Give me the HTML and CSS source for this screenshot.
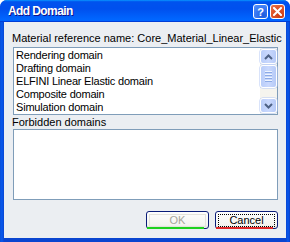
FILE: index.html
```html
<!DOCTYPE html>
<html>
<head>
<meta charset="utf-8">
<link rel="stylesheet" href="styles.css">
</head>
<body>
<div class="window">
  <div class="titlebar">
    <span class="title">Add Domain</span>
    <div class="tbtns">
      <span class="tb help">?</span>
      <span class="tb close"><svg width="9" height="9" viewBox="0 0 9 9"><path d="M1 1 L8 8 M8 1 L1 8" stroke="#fff" stroke-width="2" stroke-linecap="square" fill="none"/></svg></span>
    </div>
  </div>
  <div class="body">
    <div class="label">Material reference name: Core_Material_Linear_Elastic</div>
    <div class="list">
      <ul class="items">
        <li>Rendering domain</li>
        <li>Drafting domain</li>
        <li>ELFINI Linear Elastic domain</li>
        <li>Composite domain</li>
        <li>Simulation domain</li>
      </ul>
      <div class="scroll">
        <div class="sbtn"><svg width="9" height="6" viewBox="0 0 9 6"><path d="M1 5 L4.5 1.5 L8 5" stroke="#4d6185" stroke-width="2" fill="none"/></svg></div>
        <div class="thumb"><span></span><span></span><span></span><span></span></div>
        <div class="track"></div>
        <div class="sbtn"><svg width="9" height="6" viewBox="0 0 9 6"><path d="M1 1 L4.5 4.5 L8 1" stroke="#4d6185" stroke-width="2" fill="none"/></svg></div>
      </div>
    </div>
    <div class="label label2">Forbidden domains</div>
    <div class="list empty"></div>
    <div class="buttons">
      <div class="btn ok"><span class="txt">OK</span></div>
      <div class="btn cancel"><span class="txt focus">Cancel</span></div>
    </div>
  </div>
</div>
</body>
</html>
```

FILE: styles.css
```css
* { box-sizing: border-box; }
html, body { margin: 0; padding: 0; }
body { width: 290px; height: 242px; overflow: hidden; font-family: "Liberation Sans", Arial, sans-serif; font-size: 11px; }
.window {
  width: 290px; height: 242px;
  background: linear-gradient(90deg, #0a4fd8 0, #0758ee 2px, #0a45d0 4px, #0a45d0 286px, #0758ee 288px, #0a3ec8 290px);
  border-radius: 7px 7px 0 0;
  display: flex; flex-direction: column;
}
.titlebar {
  height: 22px; flex: none;
  background: linear-gradient(180deg, #0997ff, #0053ee 8%, #0050ee 40%, #0066ff 88%, #0066ff 93%, #005bff 95%, #003dd7 96%, #003dd7);
  border-radius: 7px 7px 0 0;
  display: flex; align-items: center; justify-content: space-between;
  padding: 0 5px 0 8px;
}
.title { color: #fff; font-weight: bold; font-size: 12px; letter-spacing: -0.6px; text-shadow: 1px 1px #0f1089; }
.tbtns { display: flex; gap: 2px; margin-top: 1px; }
.tb {
  width: 15px; height: 15px; border: 1px solid #fff; border-radius: 3px;
  display: flex; align-items: center; justify-content: center;
  color: #fff; font-weight: bold; font-size: 11px;
}
.help { background: radial-gradient(circle at 70% 80%, #1c5bdc, #3c7cf5 60%, #5a95f8); }
.close { background: radial-gradient(circle at 70% 80%, #c73b14, #e0582d 60%, #e8774e); }
.body {
  flex: 1; margin: 0 4px 4px; background: #ebeef2;
  padding: 10px 8px 0 9px;
  display: flex; flex-direction: column;
}
.label { line-height: 13px; height: 13px; color: #000; margin-left: -1px; white-space: nowrap; margin-bottom: 2px; }
.label2 { margin-top: 1px; margin-bottom: 0; }
.list {
  height: 68px; border: 1px solid #7f9db9; background: #fff;
  display: flex;
}
.list.empty { height: 71px; }
.items { flex: 1; list-style: none; margin: 0; padding: 1px 0 0 2px; overflow: hidden; }
.items li { line-height: 13px; height: 13px; white-space: nowrap; letter-spacing: -0.2px; }
.scroll { width: 17px; display: flex; flex-direction: column; padding: 1px 0; background: #f5f4ee; }
.sbtn, .thumb {
  border: 1px solid #fff; border-radius: 3px;
  background: linear-gradient(90deg, #b9cdf9, #c9d8fd 50%, #b6caf7);
  box-shadow: 0 0 0 0.5px #b4c8f6;
  display: flex; align-items: center; justify-content: center;
}
.sbtn { height: 15px; }
.thumb { height: 23px; margin-top: 1px; flex-direction: column; gap: 1px; }
.thumb span { width: 7px; background: #eef4fe; border-bottom: 1px solid #8caae6; height: 2px; }
.track { flex: 1; }
.buttons { display: flex; justify-content: flex-end; gap: 6px; margin-top: 11px; }
.btn {
  position: relative; width: 63px; height: 18px;
  border: 1px solid #0a1c78; border-radius: 3px;
  background: linear-gradient(180deg, #fefefe, #f4f4f0 80%, #e6e6e0);
  display: flex; align-items: center; justify-content: center;
  padding: 2px;
}
.btn::after { content: ""; position: absolute; left: 0; right: 4px; bottom: -1px; height: 2px; }
.ok::after { background: #1fd21f; }
.cancel::after { background: #e02a2a; }
.ok .txt { color: #a7a69b; flex: 1; text-align: center; border: 1px solid #e4e3dc; line-height: 11px; }
.cancel .txt { flex: 1; text-align: center; border: 1px dotted #000; line-height: 11px; color: #000; }
```
